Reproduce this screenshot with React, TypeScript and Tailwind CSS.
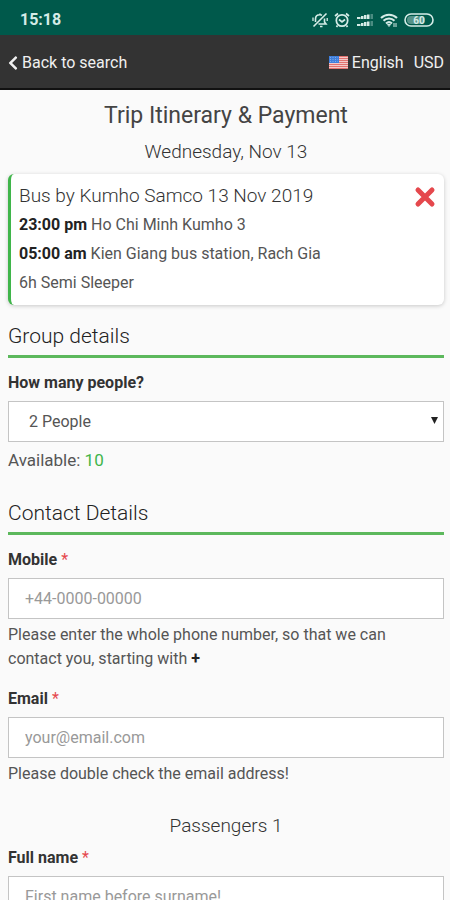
import type { ReactNode } from 'react';
import { FaChevronLeft } from 'react-icons/fa';

function StatusBar() {
  return (
    <div className="flex h-[35px] items-center justify-between bg-[#00594b] pl-5 pr-4 pt-1 text-[#d5ece7]">
      <span className="text-base font-bold">15:18</span>
      <div className="flex items-center gap-1.5">
        {/* muted bell */}
        <svg width="16" height="16" viewBox="0 0 16 16" fill="none" stroke="currentColor" strokeWidth="1.6">
          <path d="M1.500 14.500 14.500 1.500" />
          <path d="M3.500 10V7c0-2.500 1.800-4.200 4.500-4.200.8 0 1.400.1 2 .4M12.500 6.500V10l1.500 2H6.500M8 14.500h2.500M8 2.800V1.500" />
          <path d="M1 5.500v3.500M15.200 6v3" strokeWidth="1.300" />
        </svg>
        {/* alarm clock */}
        <svg width="16" height="16" viewBox="0 0 16 16" fill="none" stroke="currentColor" strokeWidth="1.700">
          <circle cx="8" cy="8.500" r="5.700" />
          <path d="M1 4 4 1.500M15 4l-3-2.500M5 7.500l3 2.500 3-2.500M3.500 13.500 2.500 15M12.500 13.500l1 1.500" />
        </svg>
        {/* two SIM signals */}
        <svg width="18" height="16" viewBox="0 0 18 16" fill="currentColor">
          <path d="M1 5h3.500v2H1zM5 4h2.500v3H5zM8 3h2.500v4H8zM11 2.500h2.500V7H11zM1 12h3.500v2H1zM5 11h2.500v3H5zM8 10h2.500v4H8zM11 9.500h2.500V14H11z" />
          <path opacity=".35" d="M14.500 2H17v5h-2.500zM14.500 9H17v5h-2.500z" />
        </svg>
        {/* wifi */}
        <svg width="18" height="16" viewBox="0 0 18 16" fill="none" stroke="currentColor" strokeWidth="2">
          <path d="M1 6c4.500-4.500 11.500-4.500 16 0M3.500 8.800c3-3 8-3 11 0M6 11.500c1.800-1.700 4.200-1.700 6 0" />
          <path d="m7.500 12.500 1.500 2 1.500-2zM14 11v4M16 11v4" strokeWidth="1" />
        </svg>
        {/* battery */}
        <svg width="30" height="16" viewBox="0 0 30 16">
          <rect x="1" y="2" width="28" height="12" rx="6" fill="none" stroke="currentColor" strokeWidth="1.600" />
          <rect x="3" y="4" width="18" height="8" rx="4" fill="currentColor" opacity=".4" />
          <text x="15" y="12" textAnchor="middle" fontSize="10" fontWeight="700" fill="currentColor">
            60
          </text>
        </svg>
      </div>
    </div>
  );
}

function UsFlag() {
  return (
    <svg width="19" height="13" viewBox="0 0 19 13" aria-hidden="true">
      <rect width="19" height="13" fill="#f3c9c9" />
      <path d="M0 .5h19M0 2.500h19M0 4.500h19M0 6.500h19M0 8.500h19M0 10.500h19M0 12.500h19" stroke="#e2726f" />
      <rect width="10" height="7" fill="#3f7fdc" />
      <path d="M1 1.500h8M1 3.500h8M1 5.500h8" stroke="#a9c8f2" strokeDasharray="1 1.500" strokeWidth=".6" />
    </svg>
  );
}

function Header() {
  return (
    <header className="flex h-[55px] items-center justify-between border-b-2 border-[#111] bg-[#333] pl-2 pr-1.5 pt-0.5 text-base text-[#f0f0f0]">
      <a href="#search" className="flex items-center gap-1">
        <FaChevronLeft className="h-4 w-2.5" />
        Back to search
      </a>
      <div className="flex items-center gap-2.5">
        <button type="button" className="flex items-center gap-1">
          <UsFlag />
          English
        </button>
        <button type="button">USD</button>
      </div>
    </header>
  );
}

function TripCard() {
  return (
    <article className="mt-2 flex items-start justify-between rounded-md border-l-3 border-[#3fb54a] bg-white px-2 pb-2 pt-2 shadow-[0_1px_4px_rgba(0,0,0,0.2)]">
      <div className="text-base leading-[29px]">
        <h3 className="text-[19px] font-light leading-7 text-[#333]">Bus by Kumho Samco 13 Nov 2019</h3>
        <p>
          <b className="font-bold text-[#222]">23:00 pm</b> Ho Chi Minh Kumho 3
        </p>
        <p>
          <b className="font-bold text-[#222]">05:00 am</b> Kien Giang bus station, Rach Gia
        </p>
        <p>6h Semi Sleeper</p>
      </div>
      <button type="button" aria-label="Remove trip" className="mt-1 text-[#e5484d]">
        <svg width="22" height="22" viewBox="0 0 22 22" stroke="currentColor" strokeWidth="5" strokeLinecap="round">
          <path d="m4 4 14 14M18 4 4 18" />
        </svg>
      </button>
    </article>
  );
}

function SectionTitle({ children }: { children: ReactNode }) {
  return (
    <h2 className="mb-[13px] border-b-3 border-[#5cb85c] pb-1 text-[21px] font-light leading-[30px] text-[#222]">
      {children}
    </h2>
  );
}

interface FieldProps {
  id: string;
  label: string;
  required?: boolean;
  help?: ReactNode;
  children: ReactNode;
}

function Field({ id, label, required, help, children }: FieldProps) {
  return (
    <div className="text-base leading-6">
      <label htmlFor={id} className="mb-1.5 block font-bold text-[#333]">
        {label} {required && <span className="font-normal text-[#e5484d]">*</span>}
      </label>
      {children}
      {help && <div className="mt-1">{help}</div>}
    </div>
  );
}

const inputClass =
  'block h-[41px] w-full border border-[#c4c4c4] bg-white px-4 text-base outline-none placeholder:text-[#999]';

export default function App() {
  return (
    <div className="min-h-screen bg-[#fafafa] font-['Roboto',sans-serif] text-[#555]">
      <StatusBar />
      <Header />
      <main className="pl-2 pr-1.5">
        <h1 className="pt-2.5 text-center text-[23px] leading-8 text-[#444]">Trip Itinerary &amp; Payment</h1>
        <p className="mt-1.5 text-center text-[19px] font-light leading-7 text-[#333]">Wednesday, Nov 13</p>
        <TripCard />

        <section className="mt-4">
          <SectionTitle>Group details</SectionTitle>
          <Field
            id="people"
            label="How many people?"
            help={
              <p className="text-[17px] leading-7">
                Available: <span className="text-[#3fb54a]">10</span>
              </p>
            }
          >
            <div className="relative">
              <select id="people" defaultValue="2" className={`${inputClass} appearance-none pl-5`}>
                <option value="1">1 People</option>
                <option value="2">2 People</option>
                <option value="3">3 People</option>
              </select>
              <svg width="7" height="7" viewBox="0 0 7 7" className="pointer-events-none absolute right-1.5 top-4" fill="#222">
                <path d="M0 0h7L3.500 7z" />
              </svg>
            </div>
          </Field>
        </section>

        <section className="mt-6">
          <SectionTitle>Contact Details</SectionTitle>
          <div className="flex flex-col gap-4">
            <Field
              id="mobile"
              label="Mobile"
              required
              help={
                <p>
                  Please enter the whole phone number, so that we can
                  <br />
                  contact you, starting with <b className="text-[#222]">+</b>
                </p>
              }
            >
              <input id="mobile" type="tel" placeholder="+44-0000-00000" className={inputClass} />
            </Field>
            <Field id="email" label="Email" required help={<p>Please double check the email address!</p>}>
              <input id="email" type="email" placeholder="your@email.com" className={inputClass} />
            </Field>
          </div>
        </section>

        <section className="mt-[26px]">
          <h3 className="mb-1.5 text-center text-[19px] font-light leading-7 text-[#333]">Passengers 1</h3>
          <Field id="fullname" label="Full name" required>
            <input id="fullname" type="text" placeholder="First name before surname!" className={inputClass} />
          </Field>
        </section>
      </main>
    </div>
  );
}
